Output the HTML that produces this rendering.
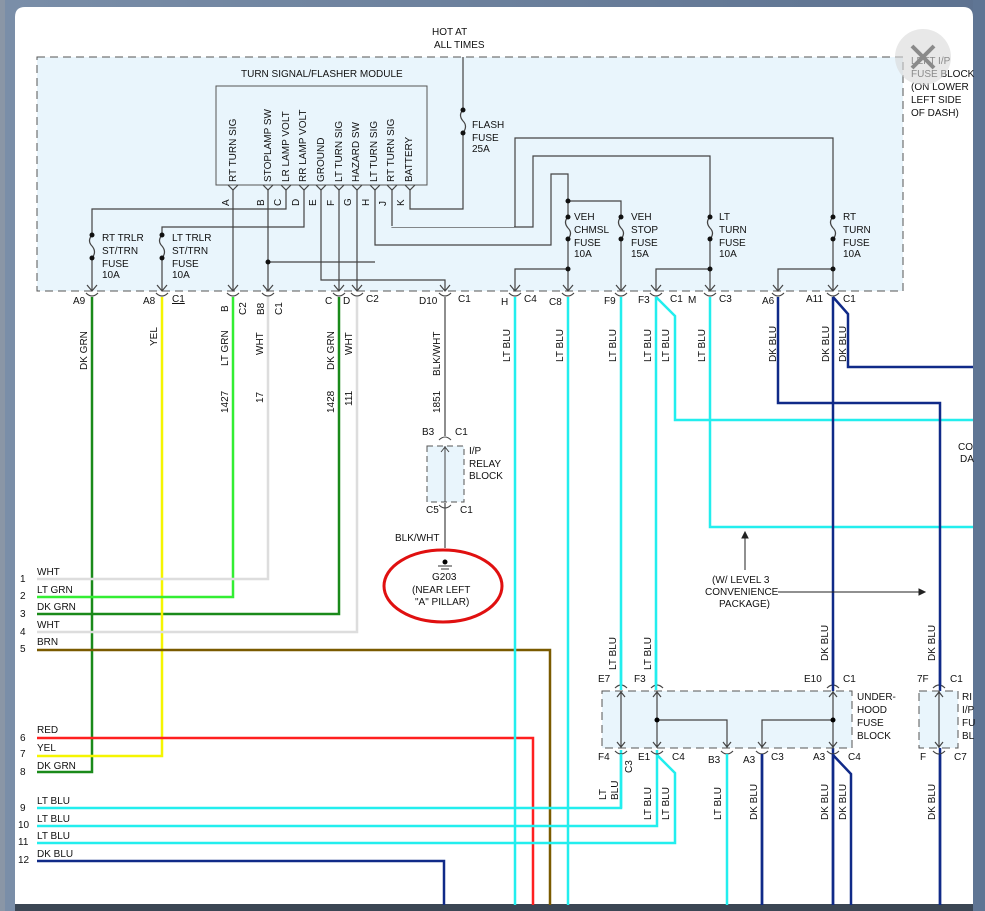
<!DOCTYPE html>
<html><head><meta charset="utf-8"><style>
html,body{margin:0;padding:0;width:985px;height:911px;overflow:hidden;background:#6c7f98}
svg{display:block}
text{font-family:"Liberation Sans",Arial,sans-serif;font-size:10px;fill:#111}
</style></head><body>
<svg width="985" height="911" viewBox="0 0 985 911">
<defs>
<linearGradient id="lg" x1="0" x2="1"><stop offset="0" stop-color="#7a8ea8"/><stop offset="1" stop-color="#5d7290"/></linearGradient>
</defs>
<rect width="985" height="911" fill="url(#lg)"/>
<rect x="0" y="0" width="5" height="911" fill="#8a96a6"/>
<path d="M25 7 H963 Q973 7 973 17 V911 H15 V17 Q15 7 25 7Z" fill="#fff"/>
<rect x="15" y="904" width="958" height="7" fill="#3b4654"/>
<rect x="973" y="0" width="12" height="911" fill="#5f7594"/>
<!-- module box -->
<rect x="37" y="57" width="866" height="234" fill="#e9f5fc" stroke="#555" stroke-dasharray="8,5"/>
<text x="432" y="35">HOT AT</text><text x="434" y="48">ALL TIMES</text>
<text x="241" y="77">TURN SIGNAL/FLASHER MODULE</text>
<rect x="216" y="86" width="211" height="99" fill="#e9f5fc" stroke="#555"/>
<g font-size="10">
<text transform="translate(236,182) rotate(-90)">RT TURN SIG</text>
<text transform="translate(271,182) rotate(-90)">STOPLAMP SW</text>
<text transform="translate(289,182) rotate(-90)">LR LAMP VOLT</text>
<text transform="translate(306,182) rotate(-90)">RR LAMP VOLT</text>
<text transform="translate(324,182) rotate(-90)">GROUND</text>
<text transform="translate(342,182) rotate(-90)">LT TURN SIG</text>
<text transform="translate(359,182) rotate(-90)">HAZARD SW</text>
<text transform="translate(377,182) rotate(-90)">LT TURN SIG</text>
<text transform="translate(394,182) rotate(-90)">RT TURN SIG</text>
<text transform="translate(412,182) rotate(-90)">BATTERY</text>
</g>
<g font-size="9">
<text transform="translate(229,206) rotate(-90)">A</text>
<text transform="translate(264,206) rotate(-90)">B</text>
<text transform="translate(281,206) rotate(-90)">C</text>
<text transform="translate(299,206) rotate(-90)">D</text>
<text transform="translate(316,206) rotate(-90)">E</text>
<text transform="translate(334,206) rotate(-90)">F</text>
<text transform="translate(351,206) rotate(-90)">G</text>
<text transform="translate(369,206) rotate(-90)">H</text>
<text transform="translate(386,206) rotate(-90)">J</text>
<text transform="translate(404,206) rotate(-90)">K</text>
</g>
<g fill="none" stroke="#444" stroke-width="1.2">
<path d="M463 57 V110 M463 133 V209 H410 V190"/>
<path d="M463 110 q-5 5 0 11 q5 5 0 12"/>
<path d="M233 190 V291"/>
<path d="M268 190 V291"/>
<path d="M286 190 V209 H92 V235 M92 258 V291"/>
<path d="M92 235 q-5 6 0 11 q5 6 0 12"/>
<path d="M304 190 V227 H162 V235 M162 258 V291"/>
<path d="M162 235 q-5 6 0 11 q5 6 0 12"/>
<path d="M321 190 V280 H445 V291"/>
<path d="M339 190 V291 M357 190 V291"/>
<path d="M375 190 V245 H551 V174 H568 V217 M568 239 V291"/>
<path d="M568 217 q-5 5 0 11 q5 5 0 11"/>
<path d="M392 190 V227 H533 V156 H710 V217 M710 239 V291"/>
<path d="M710 217 q-5 5 0 11 q5 5 0 11"/>
<path d="M515 227 V138 H833 V217 M833 239 V291"/>
<path d="M833 217 q-5 5 0 11 q5 5 0 11"/>
<path d="M568 201 H621 V217 M621 239 V291"/>
<path d="M621 217 q-5 5 0 11 q5 5 0 11"/>
<path d="M268 262 H375"/>
<path d="M568 269 H515 V291 M710 269 H656 V291 M833 269 H778 V291"/>
<!-- pin arrows on module -->
<path d="M228 185 l5 5 l5 -5 M263 185 l5 5 l5 -5 M281 185 l5 5 l5 -5 M299 185 l5 5 l5 -5 M316 185 l5 5 l5 -5 M334 185 l5 5 l5 -5 M352 185 l5 5 l5 -5 M370 185 l5 5 l5 -5 M387 185 l5 5 l5 -5 M405 185 l5 5 l5 -5"/>
<!-- connector arrows -->
<path d="M87 285 l5 6 l5 -6 M157 285 l5 6 l5 -6 M228 285 l5 6 l5 -6 M263 285 l5 6 l5 -6 M334 285 l5 6 l5 -6 M352 285 l5 6 l5 -6 M440 285 l5 6 l5 -6 M510 285 l5 6 l5 -6 M563 285 l5 6 l5 -6 M616 285 l5 6 l5 -6 M651 285 l5 6 l5 -6 M705 285 l5 6 l5 -6 M773 285 l5 6 l5 -6 M828 285 l5 6 l5 -6"/>
<path d="M86 293 q6 6 12 0 M156 293 q6 6 12 0 M227 293 q6 6 12 0 M262 293 q6 6 12 0 M333 293 q6 6 12 0 M351 293 q6 6 12 0 M439 293 q6 6 12 0 M509 293 q6 6 12 0 M562 293 q6 6 12 0 M615 293 q6 6 12 0 M650 293 q6 6 12 0 M704 293 q6 6 12 0 M772 293 q6 6 12 0 M827 293 q6 6 12 0"/>
</g>
<rect x="376" y="226" width="138" height="1" fill="#e9f5fc"/>
<g fill="#111">
<circle cx="463" cy="110" r="2.5"/><circle cx="463" cy="133" r="2.5"/>
<circle cx="92" cy="235" r="2.5"/><circle cx="92" cy="258" r="2.5"/>
<circle cx="162" cy="235" r="2.5"/><circle cx="162" cy="258" r="2.5"/>
<circle cx="568" cy="217" r="2.5"/><circle cx="568" cy="239" r="2.5"/>
<circle cx="621" cy="217" r="2.5"/><circle cx="621" cy="239" r="2.5"/>
<circle cx="710" cy="217" r="2.5"/><circle cx="710" cy="239" r="2.5"/>
<circle cx="833" cy="217" r="2.5"/><circle cx="833" cy="239" r="2.5"/>
<circle cx="568" cy="201" r="2.5"/><circle cx="268" cy="262" r="2.5"/>
<circle cx="568" cy="269" r="2.5"/><circle cx="710" cy="269" r="2.5"/><circle cx="833" cy="269" r="2.5"/>
</g>
<text x="472" y="128">FLASH</text><text x="472" y="141">FUSE</text><text x="472" y="152">25A</text>
<text x="102" y="241">RT TRLR</text><text x="102" y="254">ST/TRN</text><text x="102" y="267">FUSE</text><text x="102" y="278">10A</text>
<text x="172" y="241">LT TRLR</text><text x="172" y="254">ST/TRN</text><text x="172" y="267">FUSE</text><text x="172" y="278">10A</text>
<text x="574" y="220">VEH</text><text x="574" y="233">CHMSL</text><text x="574" y="246">FUSE</text><text x="574" y="257">10A</text>
<text x="631" y="220">VEH</text><text x="631" y="233">STOP</text><text x="631" y="246">FUSE</text><text x="631" y="257">15A</text>
<text x="719" y="220">LT</text><text x="719" y="233">TURN</text><text x="719" y="246">FUSE</text><text x="719" y="257">10A</text>
<text x="843" y="220">RT</text><text x="843" y="233">TURN</text><text x="843" y="246">FUSE</text><text x="843" y="257">10A</text>
<text x="911" y="64">LEFT I/P</text><text x="911" y="77">FUSE BLOCK</text><text x="911" y="90">(ON LOWER</text><text x="911" y="103">LEFT SIDE</text><text x="911" y="116">OF DASH)</text>
<circle cx="923" cy="57" r="28" fill="#d8d8d8" opacity="0.6"/>
<path d="M912 46 L934 68 M934 46 L912 68" stroke="#8a8a8a" stroke-width="4"/>
<g font-size="10">
<text x="73" y="304">A9</text><text x="143" y="304">A8</text><text x="172" y="302" text-decoration="underline">C1</text>
<text transform="translate(228,312) rotate(-90)">B</text><text transform="translate(246,315) rotate(-90)">C2</text>
<text transform="translate(264,315) rotate(-90)">B8</text><text transform="translate(282,315) rotate(-90)">C1</text>
<text x="325" y="304">C</text><text x="343" y="304">D</text><text x="366" y="302">C2</text>
<text x="419" y="304">D10</text><text x="458" y="302">C1</text>
<text x="501" y="305">H</text><text x="524" y="302">C4</text><text x="549" y="305">C8</text>
<text x="604" y="304">F9</text><text x="638" y="303">F3</text><text x="670" y="302">C1</text><text x="688" y="303">M</text><text x="719" y="302">C3</text>
<text x="762" y="304">A6</text><text x="806" y="302">A11</text><text x="843" y="302">C1</text>
</g>
<g fill="none" stroke-width="2.5">
<path d="M92 297 V772 H37" stroke="#1a8a1a"/>
<path d="M339 297 V614 H37" stroke="#1a8a1a"/>
<path d="M162 297 V756 H37" stroke="#f5f500"/>
<path d="M233 297 V597 H37" stroke="#33ee33"/>
<path d="M268 297 V579 H37" stroke="#ddd"/>
<path d="M357 297 V632 H37" stroke="#ddd"/>
<path d="M37 650 H550 V905" stroke="#7a5a00"/>
<path d="M37 738 H533 V905" stroke="#ff2020"/>
<path d="M37 808 H621 V750" stroke="#22eeee"/>
<path d="M37 826 H657 V750" stroke="#22eeee"/>
<path d="M37 843 H675 V773 L657 755" stroke="#22eeee"/>
<path d="M37 861 H444 V905" stroke="#102a88"/>
<path d="M515 297 V905 M568 297 V905 M621 297 V690 M710 297 V527 H973" stroke="#22eeee"/>
<path d="M656 297 V690 M656 297 L675 316 V420 H973" stroke="#22eeee"/>
<path d="M778 297 V403 H940 V905" stroke="#102a88"/>
<path d="M833 297 V905 M833 297 L848 314 V367 H973" stroke="#102a88"/>
<path d="M762 755 V905 M833 755 L851 774 V905" stroke="#102a88"/>
<path d="M445 297 V436 M445 503 V548" stroke="#444" stroke-width="1.2"/>
</g>
<g font-size="10">
<text transform="translate(87,370) rotate(-90)">DK GRN</text>
<text transform="translate(157,346) rotate(-90)">YEL</text>
<text transform="translate(228,366) rotate(-90)">LT GRN</text>
<text transform="translate(228,413) rotate(-90)">1427</text>
<text transform="translate(263,355) rotate(-90)">WHT</text>
<text transform="translate(263,403) rotate(-90)">17</text>
<text transform="translate(334,370) rotate(-90)">DK GRN</text>
<text transform="translate(334,413) rotate(-90)">1428</text>
<text transform="translate(352,355) rotate(-90)">WHT</text>
<text transform="translate(352,406) rotate(-90)">111</text>
<text transform="translate(440,376) rotate(-90)">BLK/WHT</text>
<text transform="translate(440,413) rotate(-90)">1851</text>
<text transform="translate(510,362) rotate(-90)">LT BLU</text>
<text transform="translate(563,362) rotate(-90)">LT BLU</text>
<text transform="translate(616,362) rotate(-90)">LT BLU</text>
<text transform="translate(651,362) rotate(-90)">LT BLU</text>
<text transform="translate(669,362) rotate(-90)">LT BLU</text>
<text transform="translate(705,362) rotate(-90)">LT BLU</text>
<text transform="translate(776,362) rotate(-90)">DK BLU</text>
<text transform="translate(829,362) rotate(-90)">DK BLU</text>
<text transform="translate(846,362) rotate(-90)">DK BLU</text>
</g>
<!-- relay block -->
<rect x="427" y="446" width="37" height="56" fill="#e9f5fc" stroke="#555" stroke-dasharray="6,4"/>
<path d="M445 446 V502 M441 452 l4 -5 l4 5 M439 440 q6 -6 12 0 M439 505 q6 6 12 0" stroke="#444" fill="none"/>
<text x="422" y="435">B3</text><text x="455" y="435">C1</text>
<text x="469" y="454">I/P</text><text x="469" y="467">RELAY</text><text x="469" y="479">BLOCK</text>
<text x="426" y="513">C5</text><text x="460" y="513">C1</text>
<text x="395" y="541">BLK/WHT</text>
<circle cx="445" cy="562" r="2.5"/><path d="M438 566 H452 M441 569 H449" stroke="#333"/>
<text x="432" y="580">G203</text><text x="412" y="593">(NEAR LEFT</text><text x="415" y="605">"A" PILLAR)</text>
<ellipse cx="443" cy="586" rx="59" ry="36" fill="none" stroke="#e01010" stroke-width="3"/>
<g font-size="10">
<text x="37" y="575">WHT</text><text x="20" y="582">1</text>
<text x="37" y="593">LT GRN</text><text x="20" y="599">2</text>
<text x="37" y="610">DK GRN</text><text x="20" y="617">3</text>
<text x="37" y="628">WHT</text><text x="20" y="635">4</text>
<text x="37" y="645">BRN</text><text x="20" y="652">5</text>
<text x="37" y="733">RED</text><text x="20" y="741">6</text>
<text x="37" y="751">YEL</text><text x="20" y="757">7</text>
<text x="37" y="769">DK GRN</text><text x="20" y="775">8</text>
<text x="37" y="804">LT BLU</text><text x="20" y="811">9</text>
<text x="37" y="822">LT BLU</text><text x="18" y="828">10</text>
<text x="37" y="839">LT BLU</text><text x="18" y="845">11</text>
<text x="37" y="857">DK BLU</text><text x="18" y="863">12</text>
<text x="958" y="450">CO</text><text x="960" y="462">DA</text>
<text x="712" y="583">(W/ LEVEL 3</text><text x="705" y="595">CONVENIENCE</text><text x="719" y="607">PACKAGE)</text>
</g>
<path d="M745 570 V532 M745 532 l-3 6 h6z M778 592 H925 M925 592 l-6 -3 v6z" stroke="#222" fill="#222"/>
<!-- underhood fuse block -->
<rect x="602" y="691" width="250" height="57" fill="#e9f5fc" stroke="#555" stroke-dasharray="8,5"/>
<rect x="919" y="691" width="39" height="57" fill="#e9f5fc" stroke="#555" stroke-dasharray="8,5"/>
<g fill="none" stroke="#444" stroke-width="1.2">
<path d="M621 691 V748 M657 691 V748 M657 720 H727 V748 M833 691 V748 M833 720 H762 V748 M939 691 V748"/>
<path d="M617 697 l4 -5 l4 5 M653 697 l4 -5 l4 5 M829 697 l4 -5 l4 5 M935 697 l4 -5 l4 5"/>
<path d="M617 742 l4 5 l4 -5 M653 742 l4 5 l4 -5 M723 742 l4 5 l4 -5 M758 742 l4 5 l4 -5 M829 742 l4 5 l4 -5 M935 742 l4 5 l4 -5"/>
<path d="M615 688 q6 -6 12 0 M651 688 q6 -6 12 0 M827 688 q6 -6 12 0 M933 688 q6 -6 12 0"/>
<path d="M615 751 q6 6 12 0 M651 751 q6 6 12 0 M721 751 q6 6 12 0 M756 751 q6 6 12 0 M827 751 q6 6 12 0 M933 751 q6 6 12 0"/>
</g>
<circle cx="657" cy="720" r="2.5"/><circle cx="833" cy="720" r="2.5"/>
<g fill="none" stroke-width="2.5">
<path d="M621 686 V640 M656 686 V640" stroke="#22eeee"/>
<path d="M833 686 V640 M940 686 V640" stroke="#102a88"/>
<path d="M621 754 V808 M727 754 V905" stroke="#22eeee"/>
<path d="M762 754 V905 M833 754 V905 M940 754 V905" stroke="#102a88"/>
</g>
<g font-size="10">
<text transform="translate(616,670) rotate(-90)">LT BLU</text>
<text transform="translate(651,670) rotate(-90)">LT BLU</text>
<text transform="translate(828,661) rotate(-90)">DK BLU</text>
<text transform="translate(935,661) rotate(-90)">DK BLU</text>
<text x="598" y="682">E7</text><text x="634" y="682">F3</text><text x="804" y="682">E10</text><text x="843" y="682">C1</text>
<text x="917" y="682">7F</text><text x="950" y="682">C1</text>
<text x="857" y="700">UNDER-</text><text x="857" y="713">HOOD</text><text x="857" y="726">FUSE</text><text x="857" y="739">BLOCK</text>
<text x="962" y="700">RI</text><text x="962" y="713">I/P</text><text x="962" y="726">FU</text><text x="962" y="739">BL</text>
<text x="598" y="760">F4</text><text transform="translate(632,773) rotate(-90)">C3</text>
<text x="638" y="760">E1</text><text x="672" y="760">C4</text>
<text x="708" y="763">B3</text><text x="743" y="763">A3</text><text x="771" y="760">C3</text>
<text x="813" y="760">A3</text><text x="848" y="760">C4</text>
<text x="920" y="760">F</text><text x="954" y="760">C7</text>
<text transform="translate(606,800) rotate(-90)">LT</text><text transform="translate(618,800) rotate(-90)">BLU</text>
<text transform="translate(651,820) rotate(-90)">LT BLU</text>
<text transform="translate(669,820) rotate(-90)">LT BLU</text>
<text transform="translate(721,820) rotate(-90)">LT BLU</text>
<text transform="translate(757,820) rotate(-90)">DK BLU</text>
<text transform="translate(828,820) rotate(-90)">DK BLU</text>
<text transform="translate(846,820) rotate(-90)">DK BLU</text>
<text transform="translate(935,820) rotate(-90)">DK BLU</text>
</g>
</svg>
</body></html>
